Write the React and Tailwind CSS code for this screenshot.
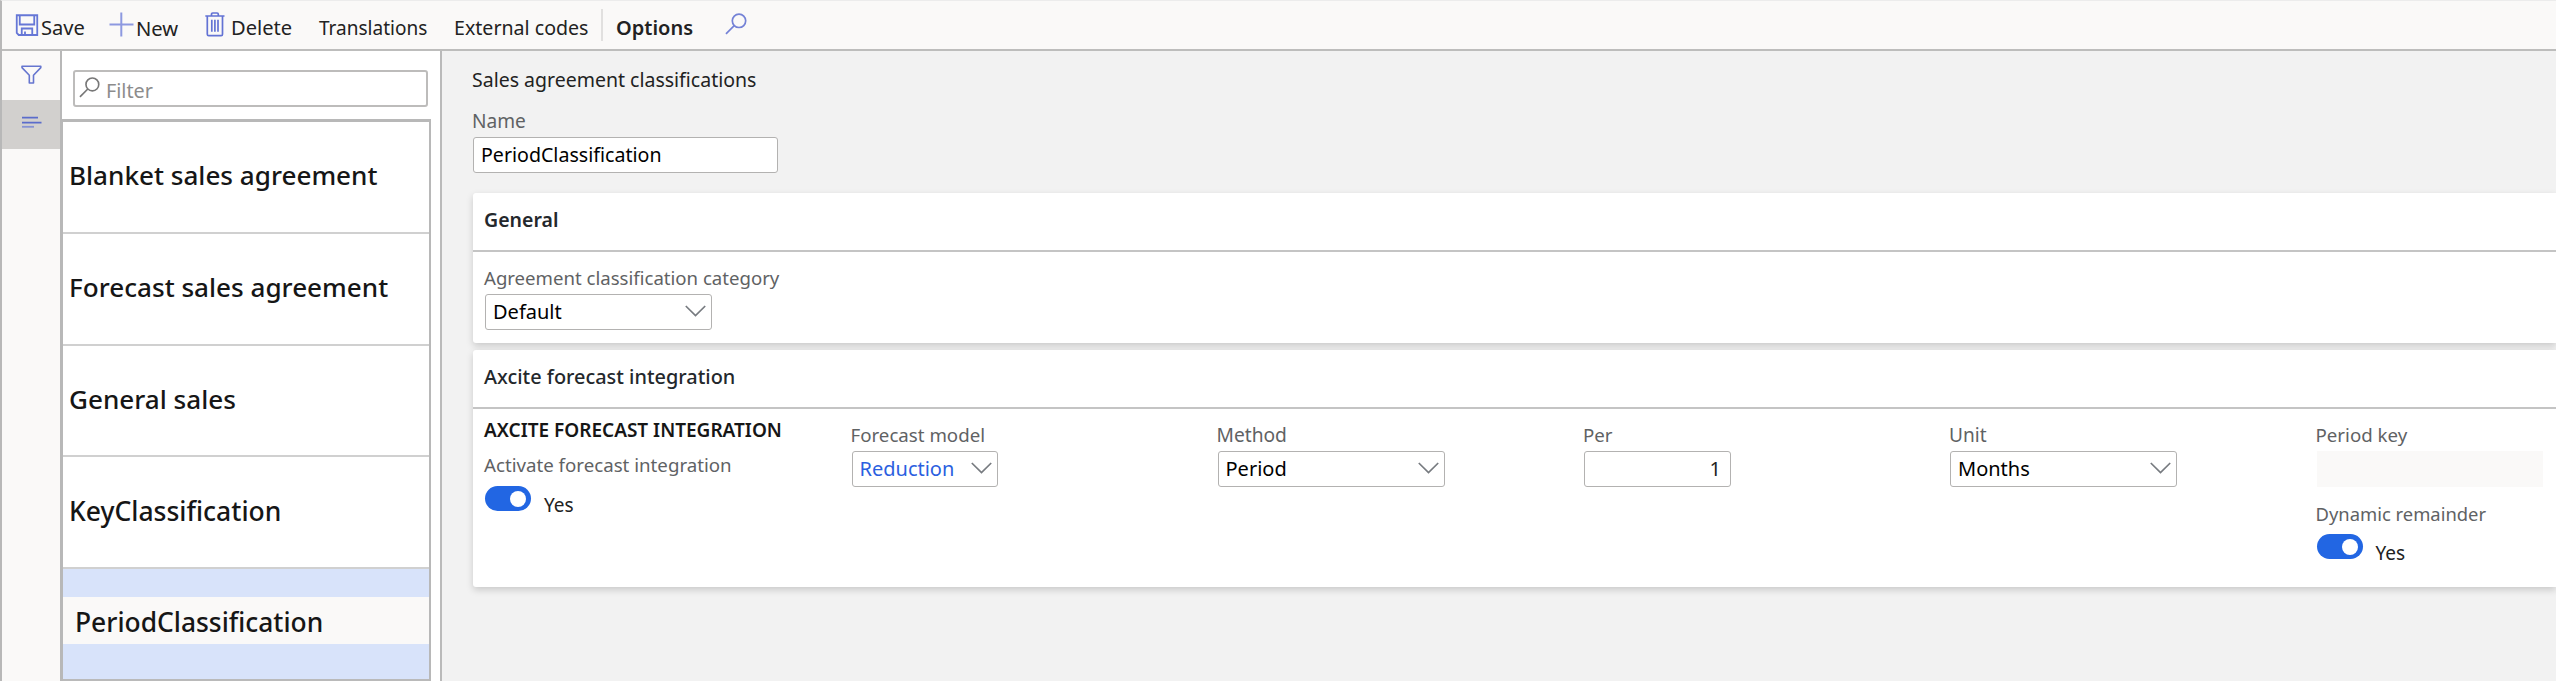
import React from "react";

function SaveIcon() {
  return (
    <svg className="mt-[13px] ml-[12px] h-[23px] w-[26px] shrink-0" viewBox="0 0 26 23" fill="none" stroke="#6677d6" strokeWidth="1.8">
      <path d="M2.75 1.25h20.5V21H4.7L2.75 19z" />
      <path d="M5.75 1.5v9h14.5v-9M7.75 21v-6.5h10.5V21M11 17.5V21" />
    </svg>
  );
}

function PlusIcon() {
  return (
    <svg className="mt-[11px] h-[25px] w-[25px] shrink-0" viewBox="0 0 25 25" fill="none" stroke="#8d99e0" strokeWidth="2">
      <path d="M12.3 .5v24M.5 12.5h24" />
    </svg>
  );
}

function TrashIcon() {
  return (
    <svg className="mt-[11px] h-[25px] w-[20px] shrink-0" viewBox="0 0 20 25" fill="none" stroke="#6373d4" strokeWidth="1.7">
      <path d="M.3 4h19.2M6.5 3.8V2.2q0-1.2 1.2-1.2h4.4q1.2 0 1.2 1.2v1.6M2.3 4v18.3q0 1.4 1.4 1.4h12.4q1.4 0 1.4-1.4V4" />
      <path d="M6.8 7.8v12M9.9 7.8v12M13 7.8v12" />
    </svg>
  );
}

function SearchIcon({ className, stroke }) {
  return (
    <svg className={className} viewBox="0 0 22 22" fill="none" stroke={stroke} strokeWidth="1.7">
      <circle cx="14" cy="7.8" r="6.7" />
      <path d="M9.2 12.6 1 20.8" />
    </svg>
  );
}

function FunnelIcon() {
  return (
    <svg className="h-[19px] w-[21px]" viewBox="0 0 21 19" fill="none" stroke="#6676cf" strokeWidth="1.6" strokeLinejoin="round">
      <path d="M1 1.2h18.8v1.4l-7.3 7.6v7.8H8.3v-7.8L1 2.6z" />
    </svg>
  );
}

function LinesIcon() {
  return (
    <svg className="h-[14px] w-[21px]" viewBox="0 0 21 14" fill="none" stroke="#5b6ccb" strokeWidth="1.8">
      <path d="M1 2.6h16M1 7.6h19.5" />
      <path d="M1 11.8h12" stroke="#8792d3" />
    </svg>
  );
}

function Chevron() {
  return (
    <svg className="mb-[2px] h-[12px] w-[21px] shrink-0" viewBox="0 0 21 12" fill="none" stroke="#777b80" strokeWidth="1.7">
      <path d="M.8 1 10.5 10.6 20.2 1" />
    </svg>
  );
}

function Label({ children, className = "" }) {
  return <div className={`-ml-px h-6 whitespace-nowrap leading-6 text-[#5f6264] ${className}`}>{children}</div>;
}

function Select({ children, width, color = "text-black" }) {
  return (
    <div className={`flex h-[36px] items-center justify-between rounded-[3px] border-[1.5px] border-[#b3b2b1] bg-white pl-[7px] pr-[5px] ${width}`}>
      <span className={`text-[20px] leading-6 ${color}`}>{children}</span>
      <Chevron />
    </div>
  );
}

function Toggle() {
  return (
    <div className="flex items-start">
      <div className="flex h-[25px] w-[46px] items-center justify-end rounded-full bg-[#2266e3] pr-[5px]">
        <div className="size-[16px] rounded-full bg-white" />
      </div>
      <span className="mt-[7px] ml-[13px] text-[19px] leading-6 text-[#222]">Yes</span>
    </div>
  );
}

function Card({ title, className, titleClass, children }) {
  return (
    <section className={`rounded-l-[3px] bg-white shadow-[0_3px_7px_rgba(0,0,0,0.17)] ${className}`}>
      <h2 className={`h-[59px] border-b-2 border-[#c4c4c4] pt-[15px] pl-[11px] leading-6 text-[#24282c] ${titleClass}`}>{title}</h2>
      {children}
    </section>
  );
}

const rows = [
  { name: "Blanket sales agreement", size: "text-[26.1px]" },
  { name: "Forecast sales agreement", size: "text-[26.1px]" },
  { name: "General sales", size: "text-[26.1px]" },
  { name: "KeyClassification", size: "text-[26.5px]" },
];

export default function App() {
  return (
    <div className="flex h-[681px] w-[2556px] flex-col overflow-hidden border-t border-l-2 border-t-[#ececec] border-l-[#b8b8b8] bg-[#f2f2f2] font-['Noto_Sans','Open_Sans',sans-serif] text-[19.5px] text-[#222]">
      <header className="flex h-[50px] shrink-0 items-start border-b-2 border-[#bdbdbc] bg-[#faf9f8] whitespace-nowrap">
        <SaveIcon />
        <span className="mt-[15px] w-[69px] pl-px text-[20.1px] leading-6">Save</span>
        <PlusIcon />
        <span className="mt-[15px] w-[71px] pl-[2px] text-[20.2px] leading-6">New</span>
        <TrashIcon />
        <span className="mt-[15px] w-[93px] pl-[6px] text-[20.1px] leading-6">Delete</span>
        <span className="mt-[15px] w-[136px] pl-px text-[19px] leading-6">Translations</span>
        <span className="mt-[15px] w-[147px] text-[19.6px] leading-6">External codes</span>
        <span className="mt-[8px] h-[32px] w-[2px] bg-[#e1e0df]" />
        <span className="mt-[15px] w-[122px] pl-[13px] text-[20px] leading-6 font-semibold">Options</span>
        <SearchIcon className="mt-[12px] h-[22px] w-[22px]" stroke="#7482d6" />
      </header>

      <div className="flex min-h-0 flex-1">
        <nav className="w-[60px] shrink-0 border-r-2 border-[#b8b8b8] bg-[#faf9f8]">
          <div className="flex h-[49px] justify-center pt-[14px]"><FunnelIcon /></div>
          <div className="flex h-[49px] justify-center bg-[#d2d0ce] pt-[15px]"><LinesIcon /></div>
        </nav>

        <aside className="flex w-[380px] shrink-0 flex-col border-r-2 border-[#bababa] bg-white">
          <div className="mt-[19px] ml-[11px] flex h-[37px] w-[355px] shrink-0 items-center rounded-[3px] border-2 border-[#bdbcbb] pl-[4px]">
            <SearchIcon className="mb-[2px] h-[21px] w-[21px]" stroke="#777" />
            <span className="mt-[5px] ml-[6px] text-[19.8px] leading-6 text-[#8c8c8c]">Filter</span>
          </div>
          <ul className="mt-[12px] w-[369px] border-t-3 border-r-2 border-l border-[#b8b8b8]">
            {rows.map((row) => (
              <li key={row.name} className={`flex h-[111.8px] items-center border-b-2 border-[#d0d0d0] pl-[6px] font-medium whitespace-nowrap text-[#161616] ${row.size}`}>
                <span className="-mt-[3px] leading-8">{row.name}</span>
              </li>
            ))}
            <li className="h-[112px] border-b-2 border-[#bababa] bg-[#d8e3fa] pt-[28px]">
              <div className="h-[47px] bg-[#faf9f8] pt-[9px] pl-[12px] text-[26.4px] leading-8 font-medium text-[#161616]">PeriodClassification</div>
            </li>
          </ul>
        </aside>

        <main className="min-w-0 flex-1 pt-[17px] pl-[31px]">
          <h1 className="-ml-px h-6 text-[19.5px] leading-6">Sales agreement classifications</h1>
          <Label className="mt-[17px] text-[19.1px]">Name</Label>
          <div className="mt-[4px] flex h-[36px] w-[305px] items-center rounded-[3px] border-[1.5px] border-[#b3b2b1] bg-white pl-[7px] text-[19.6px] text-black">PeriodClassification</div>

          <Card title="General" className="mt-[20px] h-[150px]" titleClass="font-semibold text-[19.5px]">
            <div className="pt-[14px] pl-[12px]">
              <Label className="text-[18.6px]">Agreement classification category</Label>
              <div className="mt-[4px]"><Select width="w-[227px]">Default</Select></div>
            </div>
          </Card>

          <Card title="Axcite forecast integration" className="mt-[7px] h-[237px]" titleClass="font-medium text-[19.9px]">
            <div className="flex pl-[12px] whitespace-nowrap">
              <div className="w-[366.5px] shrink-0">
                <h3 className="mt-[9px] -ml-px h-6 text-[19px] leading-6 font-semibold text-[#161616]">AXCITE FORECAST INTEGRATION</h3>
                <Label className="mt-[11px] text-[18.7px]">Activate forecast integration</Label>
                <div className="mt-[9px]"><Toggle /></div>
              </div>
              <div className="w-[366px] shrink-0 pt-[14px]">
                <Label className="mb-[4px] text-[18.7px]">Forecast model</Label>
                <Select width="w-[146px]" color="text-[#2b5fe0]">Reduction</Select>
              </div>
              <div className="w-[366.5px] shrink-0 pt-[14px]">
                <Label className="mb-[4px] text-[19.2px]">Method</Label>
                <Select width="w-[227px]">Period</Select>
              </div>
              <div className="w-[366px] shrink-0 pt-[14px]">
                <Label className="mb-[4px] text-[18.7px]">Per</Label>
                <div className="flex h-[36px] w-[147px] items-center justify-end rounded-[3px] border-[1.5px] border-[#b3b2b1] bg-white pr-[9px] text-[20px]">1</div>
              </div>
              <div className="w-[366.5px] shrink-0 pt-[14px]">
                <Label className="mb-[4px] text-[19.1px]">Unit</Label>
                <Select width="w-[227px]">Months</Select>
              </div>
              <div className="w-[239px] shrink-0 pt-[14px]">
                <Label className="mb-[4px] text-[18.7px]">Period key</Label>
                <div className="h-[36px] w-[226px] bg-[#faf9f8]" />
                <Label className="mt-[15px] mb-[8px] text-[18.4px]">Dynamic remainder</Label>
                <Toggle />
              </div>
            </div>
          </Card>
        </main>
      </div>
    </div>
  );
}
